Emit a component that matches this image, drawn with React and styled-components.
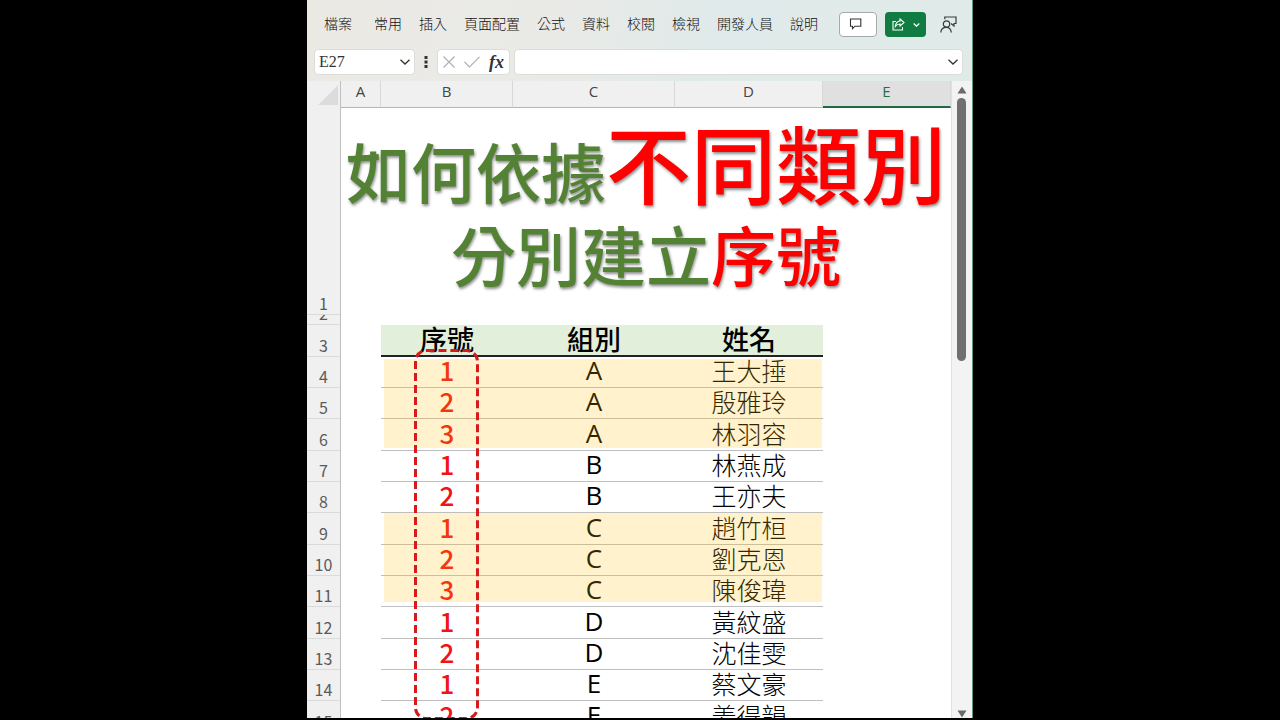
import styled, { createGlobalStyle } from "styled-components";

const tabs = ["檔案", "常用", "插入", "頁面配置", "公式", "資料", "校閱", "檢視", "開發人員", "說明"];

const columns = [
  { name: "A", width: 40 },
  { name: "B", width: 132 },
  { name: "C", width: 162 },
  { name: "D", width: 148 },
  { name: "E", active: true },
];

const members = [
  ["1", "A", "王大捶"],
  ["2", "A", "殷雅玲"],
  ["3", "A", "林羽容"],
  ["1", "B", "林燕成"],
  ["2", "B", "王亦夫"],
  ["1", "C", "趙竹桓"],
  ["2", "C", "劉克恩"],
  ["3", "C", "陳俊瑋"],
  ["1", "D", "黃紋盛"],
  ["2", "D", "沈佳雯"],
  ["1", "E", "蔡文豪"],
  ["2", "E", "姜得韻"],
];

function Chevron() {
  return (
    <svg width="10" height="6" viewBox="0 0 10 6" fill="none" stroke="currentColor" strokeWidth="1.3">
      <path d="M0.5 0.7 L5 5 L9.5 0.7" />
    </svg>
  );
}

function Ribbon() {
  return (
    <RibbonBar>
      <Tabs>
        {tabs.map((tab) => (
          <Tab key={tab} href="#">
            {tab}
          </Tab>
        ))}
      </Tabs>
      <Actions>
        <CommentButton aria-label="註解">
          <svg width="13" height="12" viewBox="0 0 13 12" fill="none" stroke="#333" strokeWidth="1.1">
            <path d="M1.5 1 H11.8 V8.2 H6 L3.5 10.7 V8.2 H1.5 Z" />
          </svg>
        </CommentButton>
        <ShareButton aria-label="共用">
          <svg width="13" height="13" viewBox="0 0 13 13" fill="none" stroke="#fff" strokeWidth="1.1">
            <path d="M4 3.5 H1 V12 H10.5 V9" />
            <path d="M8 1 L12 4.5 L8 8 V6 C6 6 4.5 6.8 3.3 8.5 C3.6 5.5 5.5 3.2 8 3 Z" />
          </svg>
          <svg width="7" height="4" viewBox="0 0 7 4" fill="none" stroke="#fff" strokeWidth="1.3">
            <path d="M0.7 0.5 L3.5 3.2 L6.3 0.5" />
          </svg>
        </ShareButton>
        <PlainButton aria-label="意見反應">
          <svg width="17" height="17" viewBox="0 0 17 17" fill="none" stroke="#3a3a3a" strokeWidth="1.2">
            <circle cx="6.5" cy="8" r="3.2" />
            <path d="M0.8 16.5 C1 13 3 11.3 6.3 11.3 C9.5 11.3 11 13 11.3 16.5" />
            <path d="M4.8 3.2 V1 H16 V7.5 H14 V10 L11 7.5" />
          </svg>
        </PlainButton>
      </Actions>
    </RibbonBar>
  );
}

function FormulaBar() {
  return (
    <FormulaRow>
      <NameBox>
        <input aria-label="名稱方塊" defaultValue="E27" />
        <Chevron />
      </NameBox>
      <svg width="4" height="12" viewBox="0 0 4 12" fill="#333">
        <rect x="0.5" width="3" height="3" />
        <rect x="0.5" y="4.5" width="3" height="3" />
        <rect x="0.5" y="9" width="3" height="3" />
      </svg>
      <FxGroup>
        <PlainButton aria-label="取消">
          <svg width="12" height="12" viewBox="0 0 12 12" stroke="#b0b0b0" strokeWidth="1.2">
            <path d="M0.5 0.5 L11.5 11.5 M11.5 0.5 L0.5 11.5" />
          </svg>
        </PlainButton>
        <PlainButton aria-label="輸入">
          <svg width="16" height="12" viewBox="0 0 16 12" fill="none" stroke="#b0b0b0" strokeWidth="1.2">
            <path d="M0.5 6 L5.5 11 L15.5 0.8" />
          </svg>
        </PlainButton>
        <FxButton>fx</FxButton>
      </FxGroup>
      <FormulaInput>
        <input aria-label="資料編輯列" />
        <Chevron />
      </FormulaInput>
    </FormulaRow>
  );
}

function Grid() {
  return (
    <Sheet>
      <SheetTable>
        <colgroup>
          <col width="34" />
          {columns.map((col) => (
            <col key={col.name} width={col.width} />
          ))}
        </colgroup>
        <thead>
          <tr>
            <Corner>
              <svg width="20" height="20" viewBox="0 0 20 20" fill="#dcdcdc">
                <path d="M20 0 V20 H0 Z" />
              </svg>
            </Corner>
            {columns.map((col) => (
              <ColumnHead key={col.name} scope="col" $active={col.active}>
                {col.name}
              </ColumnHead>
            ))}
          </tr>
        </thead>
        <tbody>
          <tr>
            <RowHead $height={207}>
              <span>1</span>
            </RowHead>
            <TitleCell colSpan={5}>
              <Title>
                <TitleLine>
                  如何依據<Accent $large>不同類別</Accent>
                </TitleLine>
                <TitleLine>
                  分別建立<Accent>序號</Accent>
                </TitleLine>
              </Title>
            </TitleCell>
          </tr>
          <tr>
            <RowHead $height={10}>
              <span>2</span>
            </RowHead>
            <td colSpan={5} />
          </tr>
          <tr>
            <RowHead $height={32}>
              <span>3</span>
            </RowHead>
            <td />
            <FieldHead scope="col">序號</FieldHead>
            <FieldHead scope="col">組別</FieldHead>
            <FieldHead scope="col">姓名</FieldHead>
            <td />
          </tr>
          {members.map(([no, group, name], i) => (
            <tr key={name}>
              <RowHead $height={i % 3 === 2 ? 32 : 31}>
                <span>{i + 4}</span>
              </RowHead>
              <td />
              <NumberCell>{no}</NumberCell>
              <Cell>{group}</Cell>
              <NameCell>{name}</NameCell>
              <td />
            </tr>
          ))}
        </tbody>
      </SheetTable>
      <Highlight $top={278} $height={89} />
      <Highlight $top={432} $height={89} />
      <Marker width="65" height="372">
        <rect x="1.5" y="1.5" width="62" height="368" rx="11" />
      </Marker>
    </Sheet>
  );
}

export default function App() {
  return (
    <Stage>
      <GlobalStyle />
      <Window>
        <Ribbon />
        <FormulaBar />
        <Body>
          <Grid />
          <Scrollbar>
            <svg width="10" height="8" viewBox="0 0 10 8" fill="#6b6b6b">
              <path d="M5 0.5 L9.5 7.5 H0.5 Z" />
            </svg>
            <Thumb />
            <svg width="10" height="8" viewBox="0 0 10 8" fill="#6b6b6b">
              <path d="M5 7.5 L9.5 0.5 H0.5 Z" />
            </svg>
          </Scrollbar>
        </Body>
      </Window>
    </Stage>
  );
}

const GlobalStyle = createGlobalStyle`
  * {
    box-sizing: border-box;
  }

  body {
    margin: 0;
    background: #000;
    font-family: "Open Sans", "Noto Sans CJK TC", sans-serif;
  }

  svg {
    display: block;
    flex: none;
  }

  button, input {
    font: inherit;
    color: inherit;
  }
`;

const Stage = styled.main`
  height: 100vh;
  padding-bottom: 2px;
  display: flex;
  justify-content: center;
  overflow: hidden;
`;

const Window = styled.div`
  width: 100%;
  max-width: 666px;
  display: flex;
  flex-direction: column;
  overflow: hidden;
  background: linear-gradient(100deg, #ebe9e4 0, #e9eae7 260px, #e0eaea 400px, #dfebe9 100%);
  border-right: 1px solid #5d9480;
`;

const RibbonBar = styled.header`
  height: 49px;
  padding: 0 15px 0 17px;
  display: flex;
  align-items: center;
  justify-content: space-between;
`;

const Tabs = styled.nav`
  padding-bottom: 3px;
  display: flex;
  gap: 17px;
`;

const Tab = styled.a`
  font-family: "Noto Sans CJK TC", sans-serif;
  font-size: 14px;
  font-weight: 300;
  line-height: 20px;
  color: #111;
  text-decoration: none;
  white-space: nowrap;

  &:first-child {
    margin-right: 5px;
  }
`;

const Actions = styled.div`
  display: flex;
  align-items: center;
  gap: 8px;
`;

const CommentButton = styled.button`
  width: 38px;
  height: 25px;
  padding: 0 0 2px 9px;
  display: flex;
  align-items: center;
  background: #fff;
  border: 1px solid #a5abab;
  border-radius: 4px;
`;

const ShareButton = styled.button`
  width: 41px;
  height: 25px;
  margin-right: 6px;
  padding: 0 6px 0 7px;
  display: flex;
  align-items: center;
  justify-content: space-between;
  background: #107c41;
  border: 0;
  border-radius: 4px;
`;

const PlainButton = styled.button`
  padding: 0;
  background: none;
  border: 0;
`;

const FormulaRow = styled.div`
  height: 32px;
  padding: 0 9px 0 7px;
  display: flex;
  align-items: flex-start;

  > svg {
    margin: 7px 9px 0;
  }
`;

const Field = styled.div`
  height: 26px;
  display: flex;
  align-items: center;
  background: #fff;
  border: 1px solid #dcdcd8;
  border-radius: 4px;
  color: #333;

  input {
    flex: 1;
    min-width: 0;
    padding: 0;
    background: none;
    border: 0;
    outline: 0;
  }
`;

const NameBox = styled(Field)`
  width: 101px;
  padding: 0 4px;

  input {
    font-family: "Liberation Serif", serif;
    font-size: 16px;
  }
`;

const FxGroup = styled(Field)`
  width: 73px;
  padding: 0 5px;
  justify-content: space-between;
`;

const FxButton = styled(PlainButton)`
  font-family: "Liberation Serif", serif;
  font-size: 18px;
  font-style: italic;
  font-weight: 700;
  line-height: 20px;
`;

const FormulaInput = styled(Field)`
  flex: 1;
  margin-left: 4px;
  padding: 0 4px;
`;

const Body = styled.div`
  flex: 1;
  min-height: 0;
  display: flex;
`;

const Sheet = styled.div`
  position: relative;
  flex: 1;
  overflow: hidden;
  background: #fff;
`;

const SheetTable = styled.table`
  width: 100%;
  table-layout: fixed;
  border-spacing: 0;

  td, th {
    padding: 0;
    font-weight: 400;
  }
`;

const Corner = styled.td`
  background: #f0f0f0;
  border-right: 1px solid #c0c0c0;

  svg {
    margin: 3px 2px 2px 11px;
  }
`;

const ColumnHead = styled.th`
  height: 27px;
  font-size: 15px;
  line-height: 20px;
  vertical-align: top;
  color: ${(p) => (p.$active ? "#1e7145" : "#444")};
  background: ${(p) => (p.$active ? "#e0e0e0" : "#f0f0f0")};
  border-right: 1px solid #d8d8d8;
  border-bottom: ${(p) => (p.$active ? "2px solid #1e6b41" : "1px solid #b5b5b5")};
`;

const RowHead = styled.th`
  background: #f0f0f0;
  border-right: 1px solid #c0c0c0;

  span {
    height: ${(p) => p.$height}px;
    display: flex;
    align-items: flex-end;
    justify-content: center;
    overflow: hidden;
    border-bottom: 1px solid #dadada;
    font-family: "Noto Sans CJK TC", sans-serif;
    font-size: 16px;
    line-height: 22px;
    color: #5a5a5a;
  }
`;

const TitleCell = styled.td`
  vertical-align: top;
`;

const Title = styled.h1`
  margin: 0;
  padding-top: 11px;
  display: flex;
  flex-direction: column;
  align-items: center;
`;

const TitleLine = styled.span`
  display: flex;
  align-items: baseline;
  font-family: "Noto Sans CJK TC", sans-serif;
  font-size: 65px;
  font-weight: 500;
  line-height: 83px;
  white-space: nowrap;
  color: #548235;
  text-shadow: 1px 2px 3px rgba(0, 0, 0, 0.45);
`;

const Accent = styled.span`
  font-size: ${(p) => (p.$large ? 85 : 65)}px;
  color: #f00;
`;

const FieldHead = styled.th`
  && {
    padding-bottom: 2px;
    font-weight: 500;
  }
  font-family: "Noto Sans CJK TC", sans-serif;
  font-size: 27px;
  line-height: 28px;
  background: #e2efda;
  border-bottom: 2px solid #222;
`;

const Cell = styled.td`
  && {
    padding-bottom: 4px;
  }
  font-size: 26px;
  line-height: 26px;
  text-align: center;
  color: #000;
  border-bottom: 1px solid #bfbfbf;
`;

const NumberCell = styled(Cell)`
  && {
    font-weight: 500;
  }
  font-family: "Noto Sans CJK TC", sans-serif;
  color: #f01414;
`;

const NameCell = styled(Cell)`
  && {
    font-weight: 300;
  }
  font-family: "Noto Sans CJK TC", sans-serif;
  font-size: 25px;
`;

const Highlight = styled.div`
  position: absolute;
  left: 77px;
  top: ${(p) => p.$top}px;
  width: 438px;
  height: ${(p) => p.$height}px;
  background: rgba(255, 188, 0, 0.2);
`;

const Marker = styled.svg`
  position: absolute;
  left: 107px;
  top: 268px;

  rect {
    fill: none;
    stroke: #d91a1a;
    stroke-width: 3px;
    stroke-dasharray: 8 4;
  }
`;

const Scrollbar = styled.div`
  width: 21px;
  padding: 5px 1px 0 0;
  display: flex;
  flex-direction: column;
  align-items: center;
  gap: 4px;
  background: #f3f3f3;
  border-left: 1px solid #e0e0e0;

  svg:last-child {
    margin-top: auto;
  }
`;

const Thumb = styled.div`
  width: 9px;
  height: 263px;
  background: #707070;
  border-radius: 5px;
`;
